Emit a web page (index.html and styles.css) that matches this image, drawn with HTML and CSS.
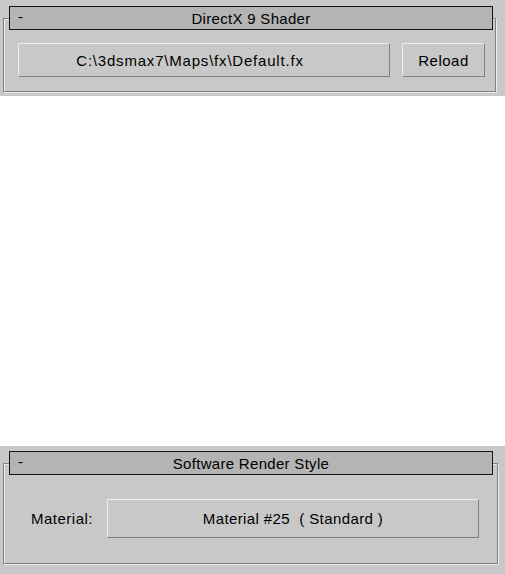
FILE: index.html
```html
<!DOCTYPE html>
<html>
<head>
<meta charset="utf-8">
<link rel="stylesheet" href="styles.css">
</head>
<body>
<section class="panel panel-top">
  <div class="frame frame-top">
    <div class="rollhead"><span class="minus">-</span><span class="title">DirectX 9 Shader</span></div>
    <div class="row row-top">
      <button class="btn btn-path">C:\3dsmax7\Maps\fx\Default.fx</button>
      <button class="btn btn-reload">Reload</button>
    </div>
  </div>
</section>
<div class="spacer"></div>
<section class="panel panel-bottom">
  <div class="frame frame-bottom">
    <div class="rollhead rollhead-b"><span class="minus">-</span><span class="title">Software Render Style</span></div>
    <div class="row row-bottom">
      <span class="label">Material:</span>
      <button class="btn btn-mat">Material #25&nbsp; ( Standard )</button>
    </div>
  </div>
</section>
</body>
</html>
```
FILE: styles.css
```css
html, body {
  margin: 0;
  padding: 0;
  background: #ffffff;
  width: 505px;
  height: 574px;
  overflow: hidden;
  font-family: "Liberation Sans", Arial, sans-serif;
  font-size: 15px;
  color: #000;
}
.panel {
  background: #c8c8c8;
  box-sizing: border-box;
  width: 505px;
}
.panel-top {
  height: 96px;
  padding: 18px 9px 0 3px;
}
.panel-bottom {
  height: 128px;
  padding: 17px 7px 0 3px;
}
.spacer {
  height: 350px;
}
.frame {
  border: 1px solid #808080;
  box-shadow: inset 1px 1px 0 #ececec, 1px 1px 0 #ececec;
  box-sizing: border-box;
}
.frame-top { height: 74px; }
.frame-bottom { height: 101px; }
.rollhead {
  position: relative;
  margin: -13px 2px 0 5px;
  height: 24px;
  box-sizing: border-box;
  border: 1px solid #161616;
  background: #b4b4b4;
  display: flex;
  align-items: center;
  justify-content: center;
}
.rollhead-b { margin-right: 4px; }
.minus {
  position: absolute;
  left: 8px;
  top: 1px;
}
.title { letter-spacing: 0.3px; }
.row {
  display: flex;
  align-items: center;
}
.row-top {
  padding: 13px 10px 0 14px;
  gap: 12px;
}
.row-bottom {
  padding: 24px 0 0 27px;
}
.label { width: 76px; letter-spacing: 0.5px; }
.btn {
  font: inherit;
  color: #000;
  background: #c8c8c8;
  border: 1px solid;
  border-color: #ececec #808080 #808080 #ececec;
  box-sizing: border-box;
  padding: 0;
  margin: 0;
  letter-spacing: 0.5px;
}
.btn-path { width: 372px; height: 34px; padding-right: 28px; letter-spacing: 0.8px; }
.btn-reload { width: 83px; height: 34px; }
.btn-mat { width: 372px; height: 39px; letter-spacing: 0.4px; }
```
